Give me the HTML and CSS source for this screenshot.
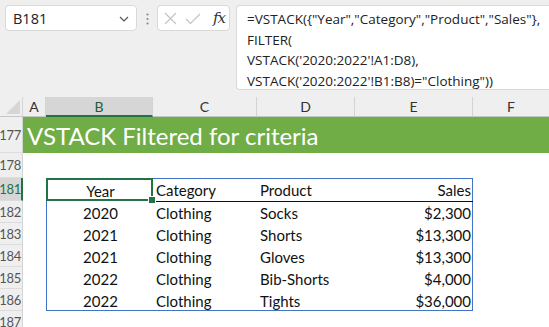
FILE: index.html
```html
<!DOCTYPE html>
<html lang="en">
<head>
    <meta charset="UTF-8">
    <title>VSTACK Filtered for criteria</title>
    <link rel="stylesheet" href="styles.css">
</head>
<body>
    <div class="topbar">
        <div class="namebox">
            <span>B181</span>
            <svg class="chevron" width="10" height="6" viewBox="0 0 10 6"><path d="M1 1 L5 5 L9 1" fill="none" stroke="#555" stroke-width="1.2"/></svg>
        </div>
        <svg class="grip" width="3" height="12" viewBox="0 0 3 12">
            <circle cx="1.5" cy="1.5" r="1.1" fill="#888"/>
            <circle cx="1.5" cy="6" r="1.1" fill="#888"/>
            <circle cx="1.5" cy="10.5" r="1.1" fill="#888"/>
        </svg>
        <div class="fxbox">
            <svg width="13" height="13" viewBox="0 0 13 13"><path d="M1 1 L12 12 M12 1 L1 12" stroke="#c2c2c2" stroke-width="1.1"/></svg>
            <svg width="16" height="13" viewBox="0 0 16 13"><path d="M1 7 L5.5 11.5 L15 2" fill="none" stroke="#c2c2c2" stroke-width="1.1"/></svg>
            <span class="fx">fx</span>
        </div>
        <div class="formula">
            <div>=VSTACK({"Year","Category","Product","Sales"},</div>
            <div>FILTER(</div>
            <div>VSTACK('2020:2022'!A1:D8),</div>
            <div>VSTACK('2020:2022'!B1:B8)="Clothing"))</div>
        </div>
    </div>

    <div class="sheet">
        <div class="corner"><svg width="14" height="14" viewBox="0 0 14 14"><path d="M14 0 L14 14 L0 14 Z" fill="#d6d6d6"/></svg></div>
        <div class="colhead">A</div>
        <div class="colhead selected">B</div>
        <div class="colhead">C</div>
        <div class="colhead">D</div>
        <div class="colhead">E</div>
        <div class="colhead last">F</div>

        <div class="rowhead r177">177</div>
        <div class="title">VSTACK Filtered for criteria</div>

        <div class="rowhead r178">178</div>
        <div class="rowhead r181 active">181</div>
        <div class="rowhead r182">182</div>
        <div class="rowhead r183">183</div>
        <div class="rowhead r184">184</div>
        <div class="rowhead r185">185</div>
        <div class="rowhead r186">186</div>
        <div class="rowhead r187">187</div>

        <div class="table">
            <div class="cell center head">Year</div>
            <div class="cell head line">Category</div>
            <div class="cell head line">Product</div>
            <div class="cell head line right">Sales</div>

            <div class="cell center">2020</div>
            <div class="cell">Clothing</div>
            <div class="cell">Socks</div>
            <div class="cell right">$2,300</div>

            <div class="cell center">2021</div>
            <div class="cell">Clothing</div>
            <div class="cell">Shorts</div>
            <div class="cell right">$13,300</div>

            <div class="cell center">2021</div>
            <div class="cell">Clothing</div>
            <div class="cell">Gloves</div>
            <div class="cell right">$13,300</div>

            <div class="cell center">2022</div>
            <div class="cell">Clothing</div>
            <div class="cell">Bib-Shorts</div>
            <div class="cell right">$4,000</div>

            <div class="cell center">2022</div>
            <div class="cell">Clothing</div>
            <div class="cell">Tights</div>
            <div class="cell right">$36,000</div>

            <div class="selection"><span class="handle"></span></div>
        </div>
    </div>
</body>
</html>
```

FILE: styles.css
```css
body {
    margin: 0;
    background: #efefef;
    font-family: Lato, "Open Sans", sans-serif;
    overflow: hidden;
}

/* formula bar */

.topbar {
    height: 97px;
    display: flex;
    align-items: flex-start;
    padding: 5px 0 0 5px;
    box-sizing: border-box;
}

.namebox {
    width: 132px;
    height: 26px;
    box-sizing: border-box;
    background: #fff;
    border: 1px solid #d9d9d9;
    border-radius: 4px;
    display: flex;
    align-items: center;
    justify-content: space-between;
    padding: 0 7px 0 7px;
    font-family: "Open Sans", sans-serif;
    font-size: 14.5px;
    color: #222;
}

.chevron {
    margin-top: 1px;
}

.grip {
    margin: 8px 8px 0 9px;
}

.fxbox {
    width: 73px;
    height: 26px;
    box-sizing: border-box;
    background: #fff;
    border: 1px solid #d9d9d9;
    border-radius: 4px;
    display: flex;
    align-items: center;
    gap: 8px;
    padding-left: 6px;
}

.fx {
    font-family: "DejaVu Serif", serif;
    font-style: italic;
    font-size: 15px;
    color: #333;
    margin-left: 4px;
    letter-spacing: -1px;
}

.formula {
    flex: 1;
    height: 85px;
    margin-left: 6px;
    box-sizing: border-box;
    background: #fff;
    border: 1px solid #d9d9d9;
    border-right: none;
    border-radius: 4px 0 0 4px;
    padding: 3px 0 0 10px;
    font-family: "Open Sans", sans-serif;
    font-size: 13.5px;
    line-height: 20.5px;
    color: #222;
    white-space: nowrap;
}

/* sheet grid */

.sheet {
    display: grid;
    grid-template-columns: 23px 23px 107px 104px 98px 118px 1fr;
    grid-template-rows: 20px 36px 25px 23px repeat(5, 22px) 22px;
    background: #fff;
}

.corner {
    background: #efefef;
    border-right: 1px solid #d4d4d4;
    border-bottom: 1px solid #c6c6c6;
    display: flex;
    align-items: flex-end;
    justify-content: flex-end;
    padding: 0 2px 2px 0;
}

.colhead {
    background: #efefef;
    border-right: 1px solid #d4d4d4;
    border-bottom: 1px solid #c6c6c6;
    display: flex;
    align-items: center;
    justify-content: center;
    font-size: 14px;
    color: #333;
}

.colhead.selected {
    background: #d6d6d6;
    border-bottom: 2px solid #217346;
    color: #1d5c39;
}

.colhead.last {
    border-right: none;
}

.rowhead {
    grid-column: 1;
    background: #efefef;
    border-right: 1px solid #d4d4d4;
    border-bottom: 1px solid #dcdcdc;
    display: flex;
    align-items: center;
    justify-content: flex-end;
    padding-right: 1px;
    font-size: 13px;
    letter-spacing: -0.3px;
    color: #555;
}

.rowhead.active {
    background: #d6d6d6;
    color: #217346;
    border-right: 2px solid #217346;
    padding-right: 0;
}

.r177 { grid-row: 2; }
.r178 { grid-row: 3; }
.r181 { grid-row: 4; }
.r182 { grid-row: 5; }
.r183 { grid-row: 6; }
.r184 { grid-row: 7; }
.r185 { grid-row: 8; }
.r186 { grid-row: 9; }
.r187 { grid-row: 10; }

.title {
    grid-column: 2 / 8;
    grid-row: 2;
    background: #70ad47;
    color: #fff;
    font-size: 24px;
    padding-left: 4px;
    display: flex;
    align-items: center;
}

/* result table */

.table {
    grid-column: 3 / 7;
    grid-row: 4 / 10;
    position: relative;
    display: grid;
    grid-template-columns: 107px 104px 98px 117px;
    grid-template-rows: 23px repeat(5, 22px);
    border: 1px solid #4472c4;
    box-sizing: border-box;
    font-size: 15px;
    color: #111;
}

.cell {
    display: flex;
    align-items: center;
    padding-left: 2px;
    white-space: nowrap;
}

.cell.center {
    justify-content: center;
    padding-left: 0;
}

.cell.right {
    justify-content: flex-end;
    padding: 0 2px 0 0;
}

.cell.line {
    border-bottom: 1px solid #111;
}

.selection {
    position: absolute;
    left: -1px;
    top: -1px;
    width: 107px;
    height: 23px;
    box-sizing: border-box;
    border: 2px solid #217346;
}

.handle {
    position: absolute;
    right: -5px;
    bottom: -5px;
    width: 6px;
    height: 6px;
    background: #217346;
    border: 1px solid #fff;
}
```
